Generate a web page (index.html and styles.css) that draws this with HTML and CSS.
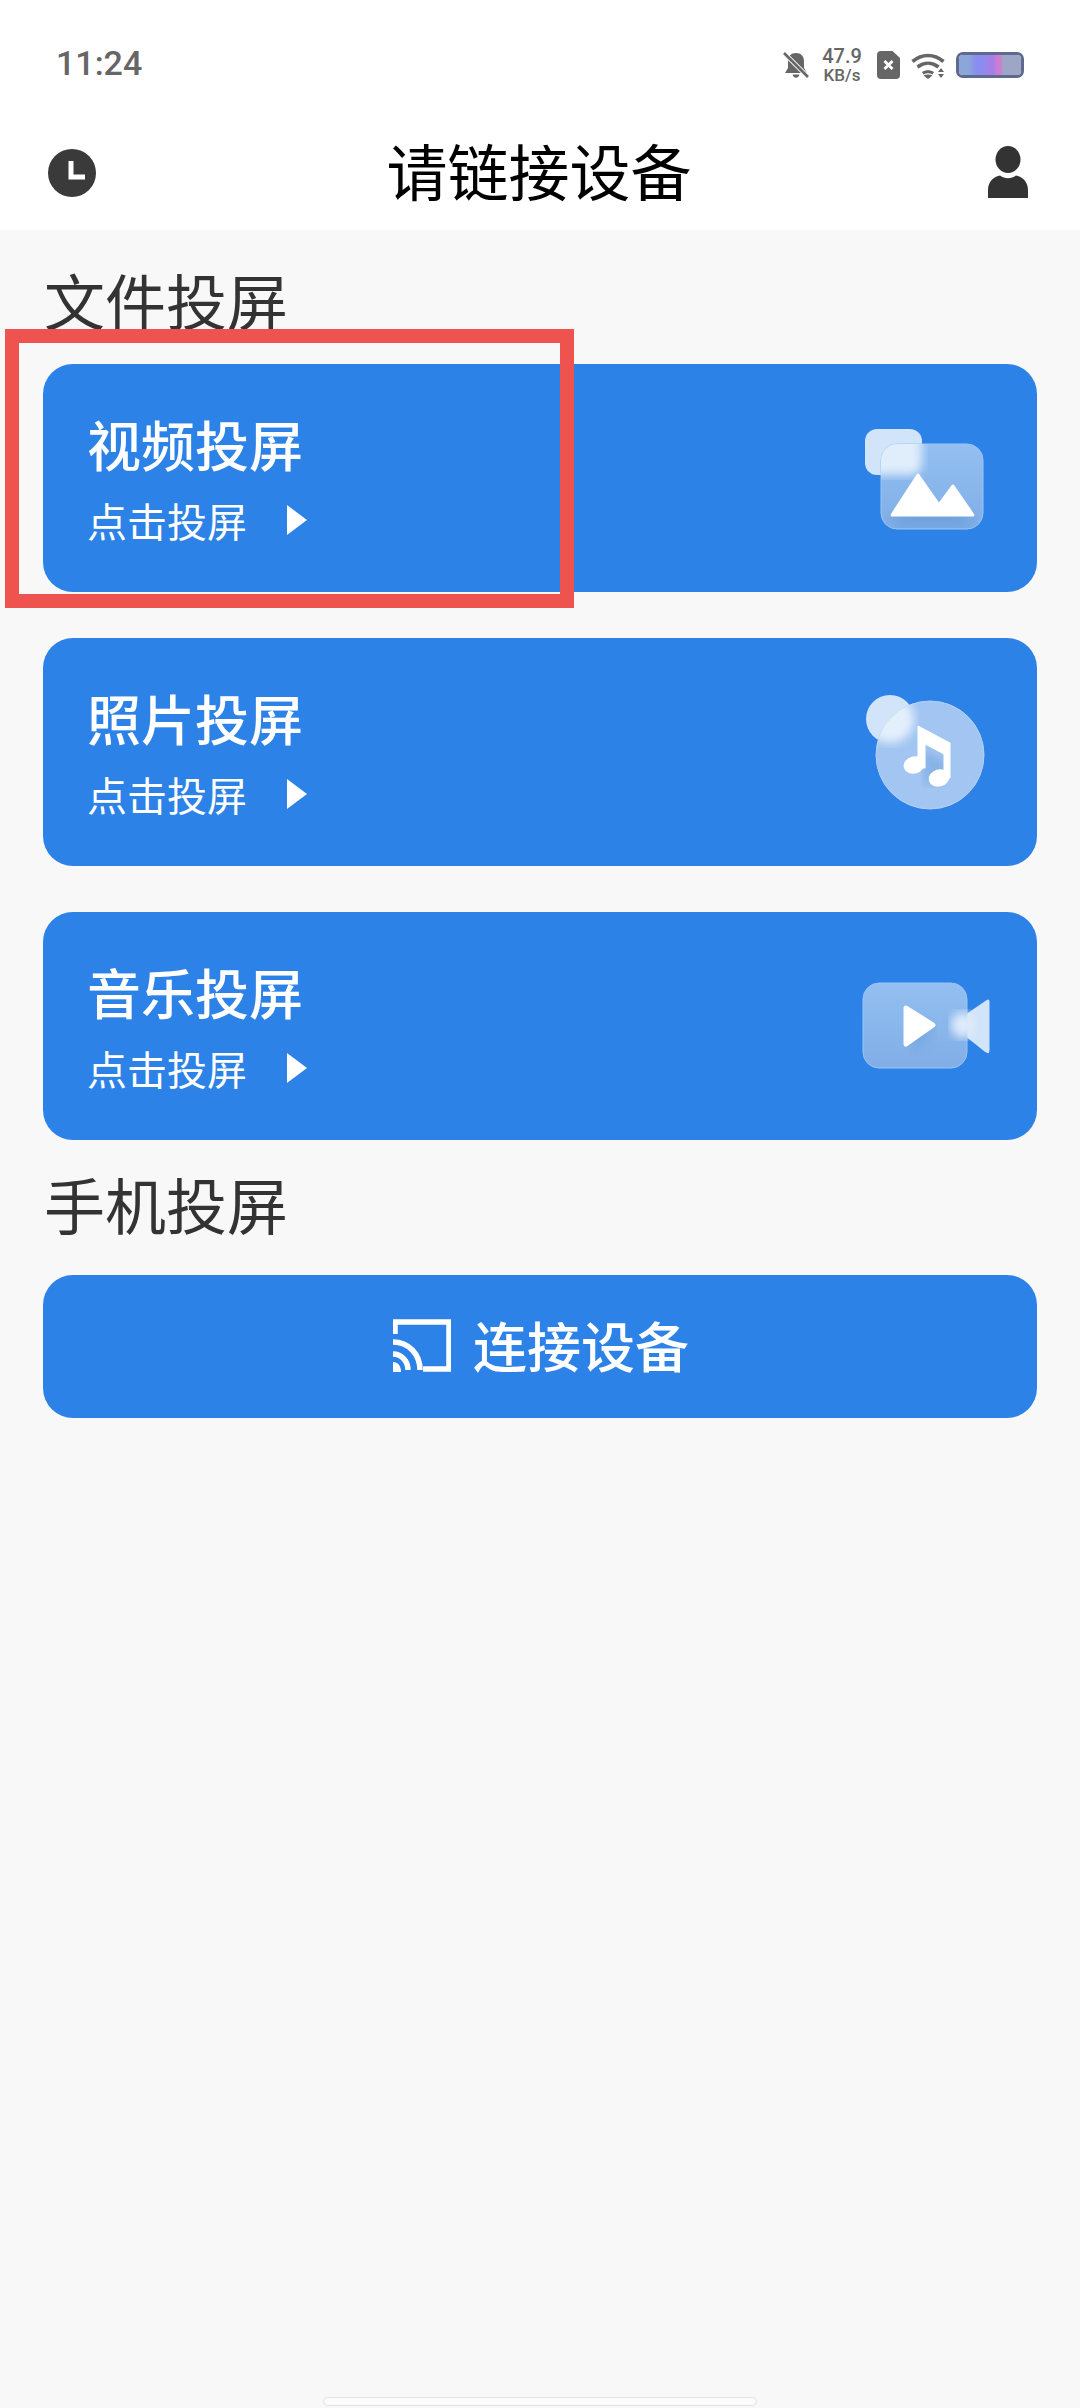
FILE: index.html
```html
<!DOCTYPE html>
<html lang="zh-CN">
<head>
    <meta charset="UTF-8">
    <meta name="viewport" content="width=device-width, initial-scale=1.0">
    <title>投屏</title>
    <link rel="stylesheet" href="styles.css">
</head>
<body>
    <div class="page">
        <!-- Status bar + title bar -->
        <header class="top">
            <div class="status">
                <span class="time">11:24</span>
                <div class="status-icons">
                    <svg class="ic-bell" viewBox="0 0 26 26">
                        <path d="M13 1c5 0 8 3.500 8 8v7l3 5H2l3-5V9c0-4.500 3-8 8-8zM9.500 22.500h7c-.5 2-2 3.300-3.500 3.300s-3-1.300-3.500-3.300z" fill="#666"/>
                        <path d="M1 1l24 24" stroke="#fff" stroke-width="4.500"/>
                        <path d="M1 1l24 24" stroke="#666" stroke-width="2.600"/>
                    </svg>
                    <div class="speed"><span>47.9</span><span>KB/s</span></div>
                    <svg class="ic-sim" viewBox="0 0 23 28">
                        <path d="M4 0h11.500L23 7v17a4 4 0 0 1-4 4H4a4 4 0 0 1-4-4V4a4 4 0 0 1 4-4z" fill="#666"/>
                        <path d="M7.500 10l8 8M15.500 10l-8 8" stroke="#fff" stroke-width="2.800"/>
                    </svg>
                    <svg class="ic-wifi" viewBox="0 0 34 27">
                        <g fill="none" stroke="#666" stroke-width="3.600">
                            <path d="M1.500 9.500c9.500-8 21.500-8 31 0"/>
                            <path d="M6.500 15c6.500-5 14.500-5 21 0"/>
                        </g>
                        <path d="M11 20c3.500-2.500 8.500-2.500 12 0l-1.500 2.500c-3-1.800-6-1.800-9 0z" fill="#666"/>
                        <path d="M12.500 23.500c3-1.200 6-1.200 9 0L17 27z" fill="#666"/>
                        <path d="M30 16l3 4h-6zM27 22h6l-3 4z" fill="#666"/>
                    </svg>
                    <div class="battery"><div class="battery-fill"></div></div>
                </div>
            </div>
            <div class="titlebar">
                <svg class="ic-clock" viewBox="0 0 48 48">
                    <circle cx="24" cy="24" r="24" fill="#3a3a3a"/>
                    <path d="M23 12v16h14" fill="none" stroke="#fff" stroke-width="5"/>
                </svg>
                <h1>请链接设备</h1>
                <svg class="ic-user" viewBox="0 0 40 52">
                    <ellipse cx="20" cy="13.500" rx="12.500" ry="13.500" fill="#333"/>
                    <path d="M0 52v-8c0-9 7-14 12-14.500 5 3.500 11 3.500 16 0C33 30 40 35 40 44v8z" fill="#333"/>
                </svg>
            </div>
        </header>

        <main class="content">
            <h2 class="section-title">文件投屏</h2>

            <div class="cards">
                <div class="card">
                    <div class="card-text">
                        <div class="card-title">视频投屏</div>
                        <div class="card-sub">点击投屏 <span class="arrow"></span></div>
                    </div>
                    <svg class="card-icon" viewBox="0 3 200 150">
                        <defs>
                            <clipPath id="clip-img"><rect x="61" y="44" width="102" height="85" rx="16"/></clipPath>
                            <linearGradient id="glass" x1="0" y1="0" x2="0" y2="1">
                                <stop offset="0" stop-color="#93bff1"/>
                                <stop offset="1" stop-color="#80aee6"/>
                            </linearGradient>
                            <filter id="blur-a"><feGaussianBlur stdDeviation="5"/></filter>
                            <filter id="blur-b"><feGaussianBlur stdDeviation="7"/></filter>
                        </defs>
                        <rect x="45" y="29" width="57" height="46" rx="12" fill="#d2e4f9"/>
                        <rect x="61" y="44" width="102" height="85" rx="16" fill="url(#glass)" stroke="#9ec5f3" stroke-width="1"/>
                        <g clip-path="url(#clip-img)">
                            <rect x="45" y="29" width="57" height="46" rx="12" fill="#e0edfb" filter="url(#blur-a)"/>
                            <rect x="75" y="112" width="75" height="14" fill="#5f93d2" opacity=".6" filter="url(#blur-b)"/>
                        </g>
                        <path d="M98 75l21 30 14-19 20 29H72z" fill="#fff" stroke="#fff" stroke-width="3" stroke-linejoin="round"/>
                    </svg>
                </div>

                <div class="card">
                    <div class="card-text">
                        <div class="card-title">照片投屏</div>
                        <div class="card-sub">点击投屏 <span class="arrow"></span></div>
                    </div>
                    <svg class="card-icon" viewBox="0 7 200 150">
                        <defs>
                            <clipPath id="clip-disc"><circle cx="110" cy="85" r="54"/></clipPath>
                        </defs>
                        <circle cx="70" cy="49" r="24" fill="#d2e4f9"/>
                        <circle cx="110" cy="85" r="54" fill="#a2c6f1" stroke="#b4d1f5" stroke-width="1"/>
                        <g clip-path="url(#clip-disc)">
                            <circle cx="70" cy="49" r="24" fill="#e4effc" filter="url(#blur-a)"/>
                            <path d="M104 80l22 12v22H104z" fill="#6d9fdc" opacity=".5" filter="url(#blur-a)"/>
                        </g>
                        <path d="M98 56l32 17v35h-6V84L105 74v24h-7z" fill="#fff" stroke="#fff" stroke-width="1" stroke-linejoin="round"/>
                        <ellipse cx="94" cy="95" rx="10.500" ry="8.500" fill="#fff" transform="rotate(-15 94 95)"/>
                        <ellipse cx="119" cy="108" rx="10.500" ry="8.500" fill="#fff" transform="rotate(-15 119 108)"/>
                    </svg>
                </div>

                <div class="card">
                    <div class="card-text">
                        <div class="card-title">音乐投屏</div>
                        <div class="card-sub">点击投屏 <span class="arrow"></span></div>
                    </div>
                    <svg class="card-icon" viewBox="0 1 200 150">
                        <defs>
                            <clipPath id="clip-cam"><rect x="43" y="33" width="104" height="85" rx="16"/></clipPath>
                        </defs>
                        <path d="M148 64l19-13c1.500-1 1.500-1 1.500 2v46c0 4 0 4-3 2l-17.500-14z" fill="#d2e4f9" stroke="#d2e4f9" stroke-width="2" stroke-linejoin="round"/>
                        <rect x="43" y="33" width="104" height="85" rx="16" fill="url(#glass)" stroke="#9ec5f3" stroke-width="1"/>
                        <g clip-path="url(#clip-cam)">
                            <path d="M92 70l22 10-22 22z" fill="#5f93d2" opacity=".5" filter="url(#blur-b)"/>
                        </g>
                        <ellipse cx="143" cy="75" rx="12" ry="13" fill="#dfebfb" filter="url(#blur-a)"/>
                        <path d="M86 58l27 17-27 19z" fill="#fff" stroke="#fff" stroke-width="5" stroke-linejoin="round"/>
                    </svg>
                </div>
            </div>

            <h2 class="section-title section-title-2">手机投屏</h2>

            <div class="connect">
                <svg class="ic-cast" viewBox="0 0 58 53">
                    <path d="M2 15V3h54v47H30" fill="none" stroke="#fff" stroke-width="5.500"/>
                    <g fill="none" stroke="#fff" stroke-width="5.500">
                        <path d="M0 23c15.500 0 27 12 27 28"/>
                        <path d="M0 35c9 0 15 7.500 15 16"/>
                    </g>
                    <path d="M0 43c5 0 8 4 8 10H0z" fill="#fff"/>
                </svg>
                <span>连接设备</span>
            </div>
        </main>

        <div class="home-bar"></div>

        <!-- Red annotation frame -->
        <div class="mark"></div>
    </div>
</body>
</html>
```

FILE: styles.css
```css
* {
    box-sizing: border-box;
}
body {
    margin: 0;
    background-color: #f8f8f8;
    font-family: "Noto Sans CJK SC", "Noto Sans", sans-serif;
}
.page {
    position: relative;
    width: 1080px;
    height: 2408px;
    display: flex;
    flex-direction: column;
    overflow: hidden;
}

/* top area */
.top {
    height: 230px;
    background-color: #fff;
    flex-shrink: 0;
}
.status {
    height: 118px;
    padding: 46px 56px 0 56px;
    display: flex;
    justify-content: space-between;
    align-items: flex-start;
}
.time {
    font-family: Roboto, sans-serif;
    font-size: 34px;
    font-weight: 500;
    line-height: 34px;
    color: #666;
}
.status-icons {
    display: flex;
    align-items: center;
    gap: 11px;
}
.ic-bell {
    width: 26px;
    height: 26px;
}
.speed {
    width: 44px;
    display: flex;
    flex-direction: column;
    align-items: center;
    font-family: Roboto, sans-serif;
    font-weight: 500;
    color: #666;
}
.speed span:first-child {
    font-size: 20px;
    line-height: 21px;
}
.speed span:last-child {
    font-size: 17px;
    line-height: 17px;
}
.ic-sim {
    width: 23px;
    height: 28px;
    margin-left: 2px;
}
.ic-wifi {
    width: 34px;
    height: 27px;
}
.battery {
    width: 68px;
    height: 26px;
    border: 3px solid #5d6a8e;
    border-radius: 7px;
    overflow: hidden;
}
.battery-fill {
    height: 100%;
    background: linear-gradient(90deg, #8ba6d8 0%, #8ba6d8 15%, #8b8cf0 28%, #8b8cf0 38%, #a47fe6 48%, #a47fe6 55%, #cd7cd0 62%, #cd7cd0 66%, #9ea6c8 72%, #9ea6c8 100%);
}
.titlebar {
    height: 112px;
    padding: 0 52px 2px 48px;
    display: flex;
    justify-content: space-between;
    align-items: center;
}
.titlebar h1 {
    margin: 0 6px 6px 0;
    font-size: 61px;
    font-weight: 400;
    line-height: 80px;
    color: #000;
}
.ic-clock {
    width: 48px;
    height: 48px;
}
.ic-user {
    width: 40px;
    height: 52px;
    margin-bottom: 2px;
}

/* content */
.content {
    padding: 0 43px;
    flex: 1;
}
.section-title {
    margin: 30px 0 24px 1px;
    font-size: 61px;
    font-weight: 400;
    line-height: 80px;
    color: #333;
}
.section-title-2 {
    margin: 24px 0 31px 1px;
}
.cards {
    display: flex;
    flex-direction: column;
    gap: 46px;
}
.card {
    height: 228px;
    padding: 0 17px 0 44px;
    border-radius: 30px;
    background-color: #2c82e6;
    color: #fff;
    display: flex;
    justify-content: space-between;
    align-items: center;
}
.card-title {
    font-size: 54px;
    font-weight: 500;
    line-height: 70px;
}
.card-sub {
    margin-top: 14px;
    font-size: 40px;
    line-height: 54px;
    display: flex;
    align-items: center;
}
.arrow {
    width: 0;
    height: 0;
    margin-left: 40px;
    border-left: 20px solid #fff;
    border-top: 15px solid transparent;
    border-bottom: 15px solid transparent;
}
.card-icon {
    width: 200px;
    height: 150px;
}
.connect {
    height: 143px;
    padding: 0 0 4px 2px;
    border-radius: 30px;
    background-color: #2c82e6;
    color: #fff;
    font-size: 54px;
    font-weight: 500;
    display: flex;
    justify-content: center;
    align-items: center;
    gap: 22px;
}
.ic-cast {
    width: 58px;
    height: 53px;
    margin-top: 2px;
}

/* gesture bar */
.home-bar {
    width: 434px;
    height: 9px;
    margin: 0 auto 2px;
    border: 1px solid #e2e2e2;
    border-radius: 5px;
    background-color: #fbfbfb;
}

/* annotation over the first card */
.mark {
    position: absolute;
    left: 5px;
    top: 329px;
    width: 569px;
    height: 279px;
    border: 14px solid #ef5350;
}
```
